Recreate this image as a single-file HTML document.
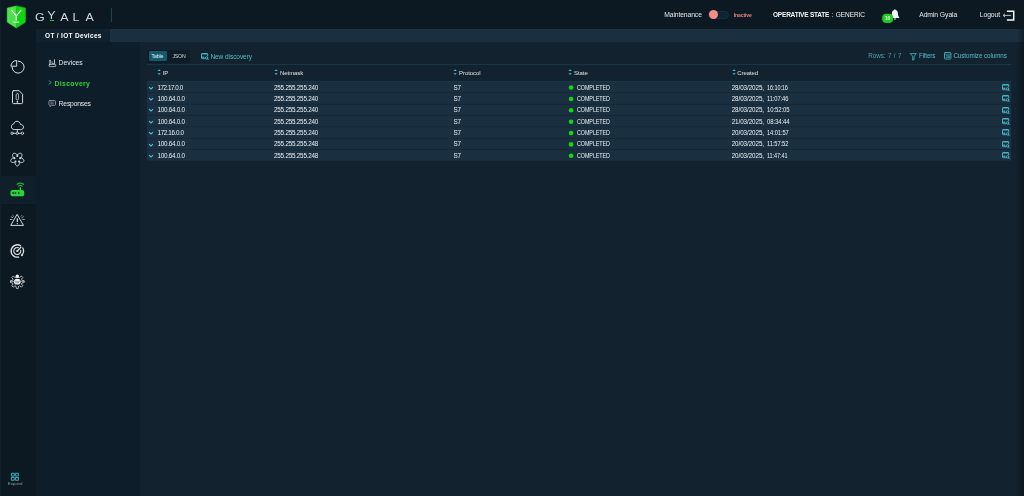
<!DOCTYPE html>
<html lang="en">
<head>
<meta charset="utf-8">
<title>GYALA - OT / IOT Devices</title>
<style>
*{box-sizing:border-box;margin:0;padding:0}
html,body{width:1024px;height:496px;overflow:hidden;background:#12222e;font-family:"Liberation Sans",sans-serif;color:#e6ebef}
.abs{position:absolute}
#topbar,#sidebar,#tabbar,#nav2,#content{will-change:transform}
#topbar{position:absolute;left:0;top:0;width:1024px;height:29px;background:#0c1922}
#sidebar{position:absolute;left:0;top:29px;width:36px;height:467px;background:#0c1922}
#tabbar{position:absolute;left:36px;top:29px;width:988px;height:13px;background:#1a3040}
#tab{position:absolute;left:0;top:0;width:74px;height:13px;background:#11212d;font-size:6.5px;font-weight:bold;color:#ffffff;line-height:13px;padding-left:9px;white-space:nowrap;letter-spacing:0.32px}
#nav2{position:absolute;left:36px;top:42px;width:104px;height:454px;background:#0e1d2a}
#content{position:absolute;left:140px;top:42px;width:884px;height:454px;background:#12222e}
.t{position:absolute;white-space:nowrap;line-height:1}
.navitem{position:absolute;left:0;width:104px;font-size:6.8px;color:#e3e8ec;white-space:nowrap;line-height:1}
.cy{color:#56bccb}
.row{position:absolute;left:7px;width:864px;height:10.7px}
.cell{position:absolute;top:2.9px;font-size:6.3px;color:#e9eef1;white-space:nowrap;line-height:1;letter-spacing:-0.21px}
.hd{position:absolute;top:27.6px;font-size:6px;color:#dce2e6;white-space:nowrap;line-height:1;letter-spacing:-0.06px}
svg{position:absolute;overflow:visible}
</style>
</head>
<body>
<svg width="0" height="0" style="left:0;top:0">
  <defs>
    <g id="disc" fill="none" stroke="#4dbdcb" stroke-width="0.9" stroke-linejoin="round" stroke-linecap="round">
      <path d="M3.6 5.7 L1.2 5.7 Q0.5 5.7 0.5 5 L0.5 1.2 Q0.5 0.5 1.2 0.5 L6 0.5 Q6.7 0.5 6.7 1.2 L6.7 3"/>
      <path d="M0.9 1.1 L6.3 1.1" stroke-width="0.8"/>
      <path d="M1.2 4.3 L3.2 4.3" stroke-width="1.5" stroke-opacity="0.85" stroke-linecap="butt"/>
      <circle cx="5.5" cy="4.9" r="1.2" stroke-width="0.85"/>
      <path d="M6.5 5.9 L7.2 6.7" stroke-width="0.95"/>
    </g>
    <g id="sort" fill="#49bccb"><path d="M0.4 2.1 L2.1 0.3 L3.8 2.1 Z"/><path d="M0.4 4.2 L2.1 6 L3.8 4.2 Z"/></g>
    <path id="chev" d="M0.3 0.4 L2 2 L3.7 0.4" fill="none" stroke="#4cc3d3" stroke-width="1.05" stroke-linecap="round" stroke-linejoin="round"/>
  </defs>
</svg>
<div id="topbar">
  <!-- shield logo -->
  <svg style="left:0;top:0" width="36" height="29" viewBox="0 0 36 29">
    <path d="M16.3 5.9 L7.6 7.9 Q7.2 8 7.2 8.5 L7.2 21.6 Q7.2 22.2 7.7 22.5 L16.3 27.9 Z" fill="#4ee04e" stroke="#4ee04e" stroke-width="0.5" stroke-linejoin="round"/>
    <path d="M16.3 5.9 L25 7.9 Q25.4 8 25.4 8.5 L25.4 21.6 Q25.4 22.2 24.9 22.5 L16.3 27.9 Z" fill="#12d512" stroke="#12d512" stroke-width="0.5" stroke-linejoin="round"/>
    <path d="M11.6 10.4 L16.3 15.8 L21 10.4 M16.3 15.8 L16.3 20" fill="none" stroke="#f4fff4" stroke-width="1.25" stroke-linecap="round"/>
    <path d="M13.5 22.2 L18.9 22.2" stroke="#e4fbe4" stroke-width="1.2"/>
  </svg>
  <div id="brand" style="position:absolute;left:34.5px;top:12.9px;font-size:10.4px;line-height:1;transform:scale(1.2,1);transform-origin:0 0;white-space:nowrap;color:#cfd3d6"><span style="letter-spacing:2.08px">G</span><span style="letter-spacing:3.83px;position:relative;top:-1.7px">Y</span><span style="letter-spacing:3.42px">A</span><span style="letter-spacing:4.92px">L</span>A</div>
  <div class="abs" style="left:49.9px;top:19.5px;width:4.2px;height:1.1px;background:#19c919"></div>
  <div class="abs" style="left:111px;top:7.5px;width:1px;height:14px;background:#18465a"></div>

  <div class="t" style="left:664.2px;top:12.1px;font-size:6.8px;color:#dfe4e8;letter-spacing:-0.12px">Maintenance</div>
  <div class="abs" style="left:707.6px;top:10.8px;width:21.4px;height:7.8px;border-radius:4px;background:#0f2431;border:0.6px solid #16303f"></div>
  <div class="abs" style="left:708.6px;top:10px;width:9.3px;height:9.3px;border-radius:50%;background:#f98b86"></div>
  <div class="t" style="left:733.8px;top:13.2px;font-size:5.1px;color:#ea8080;font-weight:bold;letter-spacing:-0.15px">Inactive</div>
  <div class="t" style="left:773px;top:12.2px;font-size:6.5px;color:#eef1f3"><span style="font-weight:bold;letter-spacing:-0.2px;color:#f4f6f8">OPERATIVE STATE</span><span style="word-spacing:0.6px"> : </span><span style="letter-spacing:-0.1px">GENERIC</span></div>
  <!-- bell -->
  <svg style="left:890.6px;top:8.7px" width="10" height="11" viewBox="1.1 0 10 11">
    <path d="M5 0.3 C5.5 0.3 5.8 0.7 5.8 1.1 C7.4 1.6 8 3 8 4.6 C8 6.6 8.6 7.6 9.4 8.4 L9.4 9 L0.6 9 L0.6 8.4 C1.4 7.6 2 6.6 2 4.6 C2 3 2.6 1.6 4.2 1.1 C4.2 0.7 4.5 0.3 5 0.3 Z" fill="#f3f5f6"/>
    <path d="M3.9 9.6 L6.1 9.6 C6.1 10.3 5.6 10.8 5 10.8 C4.4 10.8 3.9 10.3 3.9 9.6 Z" fill="#f3f5f6"/>
  </svg>
  <svg style="left:0;top:0" width="1024" height="29"><rect x="882.2" y="13.7" width="10.9" height="9.2" rx="4" fill="#22c922"/></svg>
  <div class="t" style="left:882.2px;top:15.7px;width:10.9px;text-align:center;font-size:5.2px;color:#d8f5d8;font-weight:bold;letter-spacing:-0.2px">10</div>
  <div class="t" style="left:919.2px;top:12.1px;font-size:6.8px;color:#e6eaed;letter-spacing:-0.08px">Admin Gyala</div>
  <div class="t" style="left:979.8px;top:12.1px;font-size:6.8px;color:#e6eaed;letter-spacing:-0.1px">Logout</div>
  <svg style="left:1001.6px;top:9.5px" width="13" height="11" viewBox="0 0 13 11">
    <path d="M4.9 1.3 L11.7 1.3 L11.7 10 L4.9 10" fill="none" stroke="#f5f7f8" stroke-width="1.5"/>
    <path d="M1.1 5.4 L9 5.4 M3 3.8 L1.1 5.4 L3 7" fill="none" stroke="#b4babf" stroke-width="1"/>
  </svg>
</div>

<div id="sidebar">
  <div class="abs" style="left:0;top:146.5px;width:36px;height:28px;background:#10202b"></div>
  <svg style="left:0;top:0" width="36" height="467" viewBox="0 29 36 467" fill="none" stroke="#dfe3e6" stroke-width="0.9" stroke-linecap="round" stroke-linejoin="round">
    <!-- 1 pie -->
    <path d="M18.2 61.1 A6 6 0 1 1 12.1 67.2" stroke-width="1"/>
    <path d="M16.7 65.8 L16.7 60.5 A5.6 5.6 0 0 0 10.9 65.8 Z" stroke-width="0.95"/>
    <!-- 2 file alert -->
    <path d="M13.5 90.7 L19.2 90.7 L22.6 94.3 L22.6 102.6 Q22.6 103.6 21.6 103.6 L13.5 103.6 Q12.5 103.6 12.5 102.6 L12.5 91.7 Q12.5 90.7 13.5 90.7 Z" stroke-width="0.95"/>
    <rect x="16.15" y="93.6" width="2.4" height="6.3" rx="1.2" stroke-width="0.75"/>
    <circle cx="17.35" cy="101.5" r="0.75" fill="#dfe3e6" stroke="none"/>
    <path d="M17.35 102.2 L17.35 103.4" stroke-width="0.8"/>
    <!-- 3 cloud network -->
    <path d="M14.2 129.6 C12.3 129.6 11.4 128.1 11.4 126.7 C11.4 125.2 12.5 124 13.8 123.8 C14.1 122.4 15.3 121.3 16.9 121.3 C18.8 121.3 20.2 122.6 20.6 124.5 C22.3 124.6 23.5 125.7 23.5 127.1 C23.5 128.5 22.5 129.6 21 129.6 Z" stroke-width="0.95"/>
    <path d="M17.3 130 L17.3 132 M13.4 133.3 L16 133.3 M18.6 133.3 L21.1 133.3" stroke-width="0.85"/>
    <circle cx="12.1" cy="133.3" r="1.2" stroke-width="0.8"/><circle cx="17.3" cy="133.3" r="1.2" stroke-width="0.8"/><circle cx="22.4" cy="133.3" r="1.2" stroke-width="0.8"/>
    <!-- 4 star / network -->
    <g transform="translate(17.3 159.1)">
      <path d="M5.70 0.00 L6.08 0.32 L6.33 0.66 L6.49 1.03 L6.58 1.40 L6.59 1.76 L6.51 2.12 L6.37 2.44 L6.14 2.74 L5.86 2.98 L5.51 3.18 L5.11 3.32 L4.61 3.35 L4.13 3.34 L3.75 3.37 L3.41 3.41 L3.13 3.47 L2.88 3.56 L2.67 3.68 L2.50 3.84 L2.34 4.05 L2.19 4.30 L2.05 4.60 L1.90 4.96 L1.76 5.42 L1.58 5.88 L1.32 6.22 L1.03 6.49 L0.70 6.69 L0.36 6.81 L0.00 6.85 L-0.36 6.81 L-0.70 6.69 L-1.03 6.49 L-1.32 6.22 L-1.58 5.88 L-1.76 5.42 L-1.90 4.96 L-2.05 4.60 L-2.19 4.30 L-2.34 4.05 L-2.50 3.84 L-2.67 3.68 L-2.88 3.56 L-3.13 3.47 L-3.41 3.41 L-3.75 3.37 L-4.13 3.34 L-4.61 3.35 L-5.11 3.32 L-5.51 3.18 L-5.86 2.98 L-6.14 2.74 L-6.37 2.44 L-6.51 2.12 L-6.59 1.76 L-6.58 1.40 L-6.49 1.03 L-6.33 0.66 L-6.08 0.32 L-5.70 0.00 L-5.30 -0.28 L-5.01 -0.53 L-4.77 -0.76 L-4.57 -0.97 L-4.43 -1.19 L-4.33 -1.41 L-4.28 -1.64 L-4.27 -1.90 L-4.30 -2.19 L-4.36 -2.52 L-4.45 -2.89 L-4.61 -3.35 L-4.73 -3.83 L-4.73 -4.26 L-4.65 -4.65 L-4.50 -5.00 L-4.29 -5.30 L-4.03 -5.54 L-3.71 -5.72 L-3.36 -5.82 L-2.98 -5.86 L-2.59 -5.81 L-2.18 -5.69 L-1.76 -5.42 L-1.37 -5.13 L-1.05 -4.93 L-0.76 -4.77 L-0.49 -4.65 L-0.24 -4.58 L-0.00 -4.55 L0.24 -4.58 L0.49 -4.65 L0.76 -4.77 L1.05 -4.93 L1.37 -5.13 L1.76 -5.42 L2.18 -5.69 L2.59 -5.81 L2.98 -5.86 L3.36 -5.82 L3.71 -5.72 L4.03 -5.54 L4.29 -5.30 L4.50 -5.00 L4.65 -4.65 L4.73 -4.26 L4.73 -3.83 L4.61 -3.35 L4.45 -2.89 L4.36 -2.52 L4.30 -2.19 L4.27 -1.90 L4.28 -1.64 L4.33 -1.41 L4.43 -1.19 L4.57 -0.97 L4.77 -0.76 L5.01 -0.53 L5.30 -0.28 Z" stroke-width="0.95"/>
      <path d="M0.00 -3.10 L0.00 -4.50 M2.95 -0.96 L4.28 -1.39 M1.82 2.51 L2.65 3.64 M-1.82 2.51 L-2.65 3.64 M-2.95 -0.96 L-4.28 -1.39" stroke-width="0.7" stroke-opacity="0.7"/>
      <circle cx="0.00" cy="-3.10" r="1.1" fill="#dfe3e6" fill-opacity="0.9" stroke="none"/><circle cx="2.95" cy="-0.96" r="1.1" fill="#dfe3e6" fill-opacity="0.9" stroke="none"/><circle cx="1.82" cy="2.51" r="1.1" fill="#dfe3e6" fill-opacity="0.9" stroke="none"/><circle cx="-1.82" cy="2.51" r="1.1" fill="#dfe3e6" fill-opacity="0.9" stroke="none"/><circle cx="-2.95" cy="-0.96" r="1.1" fill="#dfe3e6" fill-opacity="0.9" stroke="none"/>
    </g>
    <!-- 5 router (active) -->
    <g stroke="none" fill="#2ad53a">
      <rect x="10.5" y="189.9" width="13.7" height="6.3" rx="1.8"/>
      <rect x="19.65" y="187.2" width="1.4" height="3.2"/>
    </g>
    <g fill="#0e2a1c" stroke="none"><rect x="12.4" y="192.2" width="1.5" height="1.6"/><rect x="14.7" y="192.2" width="1.5" height="1.6"/><rect x="18" y="192.2" width="1.5" height="1.6"/></g>
    <path d="M17.2 184.3 Q20.35 182 23.5 184.3" stroke="#22b430" stroke-width="1.15"/>
    <path d="M18.5 186.1 Q20.35 184.6 22.2 186.1" stroke="#22b430" stroke-width="1.05"/>
    <!-- 6 warning -->
    <path d="M17.3 214.7 L23.5 225.4 L11.1 225.4 Z" stroke-width="0.95"/>
    <path d="M17.3 218.3 L17.3 222.1" stroke-width="1.2" stroke-linecap="butt"/>
    <circle cx="17.3" cy="223.6" r="0.65" fill="#dfe3e6" stroke="none"/>
    <path d="M12.8 215.5 L13.6 216.3 M11.3 216.9 L12.7 217.6 M10.3 219.5 L12 219.5 M21.8 215.5 L21 216.3 M23.3 216.9 L21.9 217.6 M24.3 219.5 L22.6 219.5" stroke-width="0.8" stroke-opacity="0.85"/>
    <!-- 7 radar -->
    <path d="M20.59 245.74 A6.2 6.2 0 1 0 18.59 257.06" stroke-width="1.3"/>
    <path d="M22.67 247.90 A6.2 6.2 0 0 1 22.19 254.82" stroke-width="1.2"/>
    <path d="M18.38 247.67 A3.5 3.5 0 1 0 20.72 250.27" stroke-width="1.1"/>
    <path d="M17.3 251.0 L20.98 247.05" stroke-width="1.2"/>
    <circle cx="17.3" cy="251.0" r="1.1" fill="#dfe3e6" stroke="none"/>
    <circle cx="21.91" cy="255.15" r="1" fill="#dfe3e6" stroke="none"/>
    <!-- 8 bug -->
    <g transform="translate(17.3 281.4)">
      <path d="M1.27 4.93 L0.96 7.03 L-0.96 7.03 L-1.27 4.93 L-2.45 4.44 L-4.15 5.71 L-5.51 4.35 L-4.24 2.65 L-4.73 1.47 L-6.83 1.16 L-6.83 -0.76 L-4.73 -1.07 L-4.24 -2.25 L-5.51 -3.95 L-4.15 -5.31 L-2.45 -4.04 L2.45 -4.04 L4.15 -5.31 L5.51 -3.95 L4.24 -2.25 L4.73 -1.07 L6.83 -0.76 L6.83 1.16 L4.73 1.47 L4.24 2.65 L5.51 4.35 L4.15 5.71 L2.45 4.44" stroke-width="0.75"/>
      <circle cx="0" cy="-5.2" r="1.7" fill="#eef1f3" stroke="none"/>
      <ellipse cx="0" cy="0.3" rx="3.4" ry="2.9" fill="#f0f3f5" stroke="none"/>
      <path d="M-3.6 -0.1 L3.6 -0.1" stroke="#56616a" stroke-width="0.4"/>
      <path d="M-1.3 0.6 L-1.3 1.5 M0 0.6 L0 1.5 M1.3 0.6 L1.3 1.5" stroke="#2a3740" stroke-width="0.5"/>
      <path d="M-6.9 0 L-3.6 0 M3.6 0 L6.9 0" stroke-width="0.6"/>
    </g>
    <!-- expand -->
    <g stroke="#3aa9ba" stroke-width="1.05" stroke-linejoin="miter">
      <rect x="11.4" y="473.2" width="2.8" height="2.8" rx="0.2"/><rect x="15.6" y="473.2" width="2.8" height="2.8" rx="0.2"/>
      <rect x="11.4" y="477.4" width="2.8" height="2.8" rx="0.2"/><rect x="15.6" y="477.4" width="2.8" height="2.8" rx="0.2"/>
    </g>
  </svg>
  <div class="t" style="left:7.8px;top:452.6px;font-size:4.4px;color:#8d98a1;letter-spacing:-0.05px">Expand</div>
</div>

<div id="tabbar"><div id="tab">OT / IOT Devices</div></div>

<div id="nav2">
  <svg style="left:0;top:0" width="104" height="120" viewBox="36 42 104 120" fill="none" stroke="#cfd5da" stroke-width="0.75" stroke-linecap="round" stroke-linejoin="round">
    <rect x="49.1" y="64.4" width="6.6" height="2.2" rx="0.5"/>
    <path d="M50 60.2 L50 64.2" stroke-width="1.1"/>
    <path d="M52 61.6 L52 63.6 L54.4 63.6" stroke-width="0.7"/>
    <path d="M54.5 59.8 L54.5 63.4" stroke-width="0.9"/>
    <path d="M49.4 80.8 L50.9 82.5 L49.4 84.2" stroke="#47c2d4" stroke-width="0.85"/>
    <g stroke="#a3adb5">
      <path d="M49.8 100.5 L54.6 100.5 Q55.5 100.5 55.5 101.4 L55.5 104.4 Q55.5 105.3 54.6 105.3 L51.4 105.3 L50 106.6 L50 105.3 L49.8 105.3 Q48.9 105.3 48.9 104.4 L48.9 101.4 Q48.9 100.5 49.8 100.5 Z"/>
      <path d="M50.4 102 L53.8 102 M50.4 103.8 L53.8 103.8" stroke-width="0.55"/>
      <circle cx="51.6" cy="102.9" r="0.45" fill="#a3adb5" stroke="none"/>
    </g>
  </svg>
  <div class="navitem" style="left:22.6px;top:18.2px">Devices</div>
  <div class="navitem" style="left:18.6px;top:38.9px;color:#2fd13a;font-weight:bold;font-size:6.9px;letter-spacing:0.3px">Discovery</div>
  <div class="navitem" style="left:22.6px;top:58.5px;letter-spacing:-0.2px">Responses</div>
</div>

<div id="content">
  <!-- toggle -->
  <div class="abs" style="left:7px;top:7.6px;width:43px;height:13px;border-radius:1.6px;background:#0e1c27"></div>
  <div class="abs" style="left:9px;top:9.3px;width:18px;height:9.7px;border-radius:1.2px;background:#15596d"></div>
  <div class="t" style="left:11.6px;top:11.6px;font-size:5.2px;color:#e8f3f6;letter-spacing:-0.15px">Table</div>
  <div class="t" style="left:32.4px;top:11.6px;font-size:5.2px;color:#cfd8dd;letter-spacing:-0.2px">JSON</div>
  <div class="t cy" style="left:70.4px;top:11.6px;font-size:6.5px;letter-spacing:-0.05px">New discovery</div>
  <div class="t cy" style="left:728.2px;top:10.9px;font-size:6.3px;letter-spacing:-0.05px;word-spacing:0.75px;color:#47a3b3">Rows: 7 / 7</div>
  <div class="t cy" style="left:779px;top:10.9px;font-size:6.3px;letter-spacing:-0.12px">Filters</div>
  <div class="t cy" style="left:813.4px;top:10.9px;font-size:6.3px;letter-spacing:-0.09px">Customize columns</div>
  <div class="abs" style="left:7px;top:21.7px;width:864px;height:0.8px;background:#163846"></div>
  <svg style="left:60.8px;top:10.5px" width="8" height="8"><use href="#disc"/></svg>
  <svg style="left:770px;top:10.6px" width="7" height="8" viewBox="0 0 7 8" fill="none" stroke="#4dbdcb" stroke-width="0.8" stroke-linejoin="round" stroke-linecap="round"><path d="M0.5 0.6 L6.3 0.6 L4.1 3.6 L4.1 6.4 L2.7 7.2 L2.7 3.6 Z"/></svg>
  <svg style="left:804px;top:10.4px" width="8" height="8" viewBox="0 0 8 8" fill="none" stroke="#4dbdcb" stroke-width="0.8" stroke-linejoin="round" stroke-linecap="round"><rect x="0.5" y="0.5" width="6.4" height="6.6" rx="0.7"/><path d="M0.7 2.2 L6.7 2.2" stroke-width="0.6"/><path d="M2 3.8 L3.4 3.8 M2 5.4 L3.4 5.4 M4.6 3.8 L5.6 3.8 L5.6 5.6 L4.6 5.6 Z" stroke-width="0.7"/></svg>
  <svg style="left:17.2px;top:27.1px" width="4" height="7"><use href="#sort"/></svg>
  <svg style="left:134.4px;top:27.1px" width="4" height="7"><use href="#sort"/></svg>
  <svg style="left:313.2px;top:27.1px" width="4" height="7"><use href="#sort"/></svg>
  <svg style="left:428px;top:27.1px" width="4" height="7"><use href="#sort"/></svg>
  <svg style="left:592px;top:27.1px" width="4" height="7"><use href="#sort"/></svg>
  <!-- header -->
  <div class="abs" style="left:7px;top:39px;width:864px;height:0.8px;background:#163c4a"></div>
  <div class="hd" style="left:22.7px">IP</div>
  <div class="hd" style="left:140px">Netmask</div>
  <div class="hd" style="left:319px">Protocol</div>
  <div class="hd" style="left:434px">State</div>
  <div class="hd" style="left:597.2px">Created</div>
  <svg style="left:7px;top:0" width="864" height="130" viewBox="0 0 864 130">
    <rect x="0" y="39.70" width="864" height="10.85" fill="#1a3040"/>
    <rect x="0" y="51.06" width="864" height="10.85" fill="#1a3040"/>
    <rect x="0" y="62.42" width="864" height="10.85" fill="#1a3040"/>
    <rect x="0" y="73.78" width="864" height="10.85" fill="#1a3040"/>
    <rect x="0" y="85.14" width="864" height="10.85" fill="#1a3040"/>
    <rect x="0" y="96.50" width="864" height="10.85" fill="#1a3040"/>
    <rect x="0" y="107.86" width="864" height="10.85" fill="#1a3040"/>
    <circle cx="424.1" cy="45.60" r="2.3" fill="#12da12"/>
    <circle cx="424.1" cy="56.96" r="2.3" fill="#12da12"/>
    <circle cx="424.1" cy="68.32" r="2.3" fill="#12da12"/>
    <circle cx="424.1" cy="79.68" r="2.3" fill="#12da12"/>
    <circle cx="424.1" cy="91.04" r="2.3" fill="#12da12"/>
    <circle cx="424.1" cy="102.40" r="2.3" fill="#12da12"/>
    <circle cx="424.1" cy="113.76" r="2.3" fill="#12da12"/>
  </svg>
  <div class="row" style="top:39.70px"><svg style="left:2px;top:5px" width="4" height="3"><use href="#chev"/></svg><svg style="left:854.8px;top:2.3px" width="8" height="8"><use href="#disc"/></svg><span class="cell" style="left:10.5px;letter-spacing:-0.45px">172.17.0.0</span><span class="cell" style="left:127px">255.255.255.240</span><span class="cell" style="left:306.4px">S7</span><span class="cell" style="left:429.8px;letter-spacing:-0.05px;transform:scaleX(0.85);transform-origin:0 0">COMPLETED</span><span class="cell" style="left:584.7px"><span style="letter-spacing:-0.09px;word-spacing:1.55px">28/03/2025, </span><span style="display:inline-block;letter-spacing:-0.1px;transform:scaleX(0.877);transform-origin:0 50%">16:10:16</span></span></div>
  <div class="row" style="top:51.06px"><svg style="left:2px;top:5px" width="4" height="3"><use href="#chev"/></svg><svg style="left:854.8px;top:2.3px" width="8" height="8"><use href="#disc"/></svg><span class="cell" style="left:10.5px;letter-spacing:-0.25px">100.64.0.0</span><span class="cell" style="left:127px">255.255.255.240</span><span class="cell" style="left:306.4px">S7</span><span class="cell" style="left:429.8px;letter-spacing:-0.05px;transform:scaleX(0.85);transform-origin:0 0">COMPLETED</span><span class="cell" style="left:584.7px"><span style="letter-spacing:-0.09px;word-spacing:1.55px">28/03/2025, </span><span style="display:inline-block;letter-spacing:-0.1px;transform:scaleX(0.915);transform-origin:0 50%">11:07:46</span></span></div>
  <div class="row" style="top:62.42px"><svg style="left:2px;top:5px" width="4" height="3"><use href="#chev"/></svg><svg style="left:854.8px;top:2.3px" width="8" height="8"><use href="#disc"/></svg><span class="cell" style="left:10.5px;letter-spacing:-0.25px">100.64.0.0</span><span class="cell" style="left:127px">255.255.255.240</span><span class="cell" style="left:306.4px">S7</span><span class="cell" style="left:429.8px;letter-spacing:-0.05px;transform:scaleX(0.85);transform-origin:0 0">COMPLETED</span><span class="cell" style="left:584.7px"><span style="letter-spacing:-0.09px;word-spacing:1.55px">28/03/2025, </span><span style="display:inline-block;letter-spacing:-0.1px;transform:scaleX(0.95);transform-origin:0 50%">10:52:05</span></span></div>
  <div class="row" style="top:73.78px"><svg style="left:2px;top:5px" width="4" height="3"><use href="#chev"/></svg><svg style="left:854.8px;top:2.3px" width="8" height="8"><use href="#disc"/></svg><span class="cell" style="left:10.5px;letter-spacing:-0.25px">100.64.0.0</span><span class="cell" style="left:127px">255.255.255.240</span><span class="cell" style="left:306.4px">S7</span><span class="cell" style="left:429.8px;letter-spacing:-0.05px;transform:scaleX(0.85);transform-origin:0 0">COMPLETED</span><span class="cell" style="left:584.7px"><span style="letter-spacing:-0.09px;word-spacing:1.55px">21/03/2025, </span><span style="display:inline-block;letter-spacing:-0.1px;transform:scaleX(0.95);transform-origin:0 50%">08:34:44</span></span></div>
  <div class="row" style="top:85.14px"><svg style="left:2px;top:5px" width="4" height="3"><use href="#chev"/></svg><svg style="left:854.8px;top:2.3px" width="8" height="8"><use href="#disc"/></svg><span class="cell" style="left:10.5px;letter-spacing:-0.36px">172.16.0.0</span><span class="cell" style="left:127px">255.255.255.240</span><span class="cell" style="left:306.4px">S7</span><span class="cell" style="left:429.8px;letter-spacing:-0.05px;transform:scaleX(0.85);transform-origin:0 0">COMPLETED</span><span class="cell" style="left:584.7px"><span style="letter-spacing:-0.09px;word-spacing:1.55px">20/03/2025, </span><span style="display:inline-block;letter-spacing:-0.1px;transform:scaleX(0.915);transform-origin:0 50%">14:01:57</span></span></div>
  <div class="row" style="top:96.50px"><svg style="left:2px;top:5px" width="4" height="3"><use href="#chev"/></svg><svg style="left:854.8px;top:2.3px" width="8" height="8"><use href="#disc"/></svg><span class="cell" style="left:10.5px;letter-spacing:-0.25px">100.64.0.0</span><span class="cell" style="left:127px">255.255.255.248</span><span class="cell" style="left:306.4px">S7</span><span class="cell" style="left:429.8px;letter-spacing:-0.05px;transform:scaleX(0.85);transform-origin:0 0">COMPLETED</span><span class="cell" style="left:584.7px"><span style="letter-spacing:-0.09px;word-spacing:1.55px">20/03/2025, </span><span style="display:inline-block;letter-spacing:-0.1px;transform:scaleX(0.915);transform-origin:0 50%">11:57:52</span></span></div>
  <div class="row" style="top:107.86px"><svg style="left:2px;top:5px" width="4" height="3"><use href="#chev"/></svg><svg style="left:854.8px;top:2.3px" width="8" height="8"><use href="#disc"/></svg><span class="cell" style="left:10.5px;letter-spacing:-0.25px">100.64.0.0</span><span class="cell" style="left:127px">255.255.255.248</span><span class="cell" style="left:306.4px">S7</span><span class="cell" style="left:429.8px;letter-spacing:-0.05px;transform:scaleX(0.85);transform-origin:0 0">COMPLETED</span><span class="cell" style="left:584.7px"><span style="letter-spacing:-0.09px;word-spacing:1.55px">20/03/2025, </span><span style="display:inline-block;letter-spacing:-0.1px;transform:scaleX(0.877);transform-origin:0 50%">11:47:41</span></span></div>
</div>
<div class="abs" style="left:1017px;top:29px;width:7px;height:467px;background:linear-gradient(to right,rgba(9,18,25,0),rgba(9,18,25,0.6));pointer-events:none"></div>
<div class="abs" style="left:0;top:0;width:1px;height:496px;background:#111f29"></div>
</body>
</html>
